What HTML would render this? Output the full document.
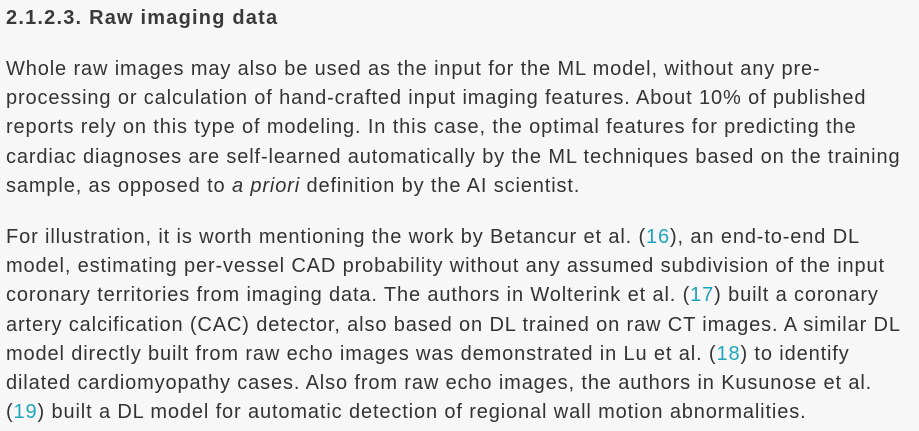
<!DOCTYPE html>
<html><head><meta charset="utf-8"><style>
html,body{margin:0;padding:0;background:#f7f7f7;width:919px;height:431px;overflow:hidden}
body{font-family:"Liberation Sans",sans-serif;color:#333}
h3{position:absolute;left:6px;top:5px;margin:0;font-size:20px;font-weight:bold;color:#3a3a3a;line-height:26px;letter-spacing:1.2px}
.p{position:absolute;left:6px;font-size:20px;line-height:29.2px;white-space:nowrap;letter-spacing:0.87px}
a{color:#1fa5b8;text-decoration:none}
</style></head><body>
<h3>2.1.2.3. Raw imaging data</h3>
<div class="p" style="top:55px">Whole raw images may also be used as the input for the ML model, without any pre-<br>processing or calculation of hand-crafted input imaging features. About 10% of published<br>reports rely on this type of modeling. In this case, the optimal features for predicting the<br>cardiac diagnoses are self-learned automatically by the ML techniques based on the training<br>sample, as opposed to <i>a priori</i> definition by the AI scientist.</div>
<div class="p" style="top:223px">For illustration, it is worth mentioning the work by Betancur et al. (<a>16</a>), an end-to-end DL<br>model, estimating per-vessel CAD probability without any assumed subdivision of the input<br>coronary territories from imaging data. The authors in Wolterink et al. (<a>17</a>) built a coronary<br>artery calcification (CAC) detector, also based on DL trained on raw CT images. A similar DL<br>model directly built from raw echo images was demonstrated in Lu et al. (<a>18</a>) to identify<br>dilated cardiomyopathy cases. Also from raw echo images, the authors in Kusunose et al.<br>(<a>19</a>) built a DL model for automatic detection of regional wall motion abnormalities.</div>
</body></html>
